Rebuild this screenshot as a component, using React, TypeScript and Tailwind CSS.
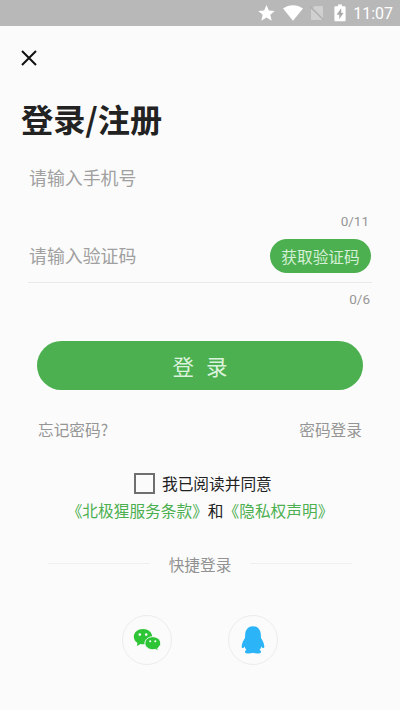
import { useState } from 'react';

const CODE_LENGTH = 6;
const PHONE_LENGTH = 11;

// ─── Icons ────────────────────────────────────────────────────────────────────

function StarIcon() {
  return (
    <svg width="17" height="16" viewBox="0 0 17 16" fill="#fff">
      <path d="M8.5 0l2.4 5.4 5.9.5-4.500 3.900 1.400 5.900-5.200-3.100-5.200 3.100 1.400-5.900L.2 5.900l5.900-.5z" />
    </svg>
  );
}

function WifiIcon() {
  return (
    <svg width="20" height="16" viewBox="0 0 20 16" fill="#fff">
      <path d="M0 3.6C5.8-.9 14.2-.9 20 3.6L10 15.8z" />
    </svg>
  );
}

function NoSimIcon() {
  return (
    <svg width="14" height="16" viewBox="0 0 14 16">
      <path d="M4.6 1H12a1 1 0 0 1 1 1v12a1 1 0 0 1-1 1H2a1 1 0 0 1-1-1V4.6z" fill="#d0d0d0" />
      <path d="M0 1.4l13.4 13.4" stroke="#b0b0b0" strokeWidth="1.6" />
    </svg>
  );
}

function BatteryIcon() {
  return (
    <svg width="12" height="18" viewBox="0 0 12 18">
      <path d="M4 0.5h4v1.8h2.6a1 1 0 0 1 1 1v13a1 1 0 0 1-1 1H1.4a1 1 0 0 1-1-1v-13a1 1 0 0 1 1-1H4z" fill="#fff" />
      <path d="M7 4.8L3 10.4h2.5v4.2L9.2 9H7z" fill="#a8a8a8" stroke="#a8a8a8" strokeWidth="0.4" />
    </svg>
  );
}

function WechatIcon() {
  return (
    <svg width="28" height="24" viewBox="0 0 28 24">
      <path d="M10 1C4.9 1 .8 4.400.8 8.700c0 2.500 1.400 4.700 3.600 6.100l-.4 3.200 3.500-2c.8.2 1.700.3 2.500.3 5.100 0 9.200-3.300 9.200-7.600S15.100 1 10 1z" fill="#2dc535" />
      <path
        d="M19.800 8.700c-4.400 0-7.900 2.900-7.900 6.500s3.500 6.500 7.900 6.500c.9 0 1.800-.1 2.600-.4l2.800 1.600-.4-2.900c1.800-1.200 2.900-2.900 2.900-4.800 0-3.600-3.500-6.500-7.900-6.500z"
        fill="#2dc535"
        stroke="#fbfbfb"
        strokeWidth="1"
      />
      <circle cx="6.800" cy="6.600" r="1.300" fill="#fbfbfb" />
      <circle cx="13.200" cy="6.600" r="1.300" fill="#fbfbfb" />
      <circle cx="17.200" cy="13.200" r="1.050" fill="#fbfbfb" />
      <circle cx="22.300" cy="13.200" r="1.050" fill="#fbfbfb" />
    </svg>
  );
}

function QqIcon() {
  return (
    <svg width="24" height="28" viewBox="0 0 24 28" fill="#2cb4f8">
      <path d="M12 .3C7.500.3 4.400 3.700 4.200 8.200L4 12C2.300 14.500.8 17.500.7 20.200c0 1.300.3 1.900.8 1.900.7 0 1.500-.8 2.100-1.700.4 1.500 1 2.800 1.900 3.700-.9.400-1.500 1-1.500 1.800 0 1.100 1.500 1.500 4 1.500 1.600 0 3.100-.2 4-.6.9.4 2.400.6 4 .6 2.500 0 4-.4 4-1.500 0-.8-.6-1.400-1.500-1.800.9-.9 1.500-2.200 1.900-3.700.6.900 1.400 1.700 2.100 1.700.5 0 .8-.6.8-1.900C23.200 17.500 21.700 14.500 20 12l-.2-3.800C19.600 3.700 16.500.3 12 .3z" />
    </svg>
  );
}

// ─── Sections ─────────────────────────────────────────────────────────────────

function StatusBar() {
  return (
    <header className="flex h-[26px] items-center justify-end bg-[#b8b8b8] pr-[7px]">
      <StarIcon />
      <span className="ml-[8px]"><WifiIcon /></span>
      <span className="ml-[7px]"><NoSimIcon /></span>
      <span className="ml-[10px]"><BatteryIcon /></span>
      <span className="ml-[7px] w-[40px] pt-[2px] text-right font-[Roboto] text-[16px] leading-[24px] text-white">11:07</span>
    </header>
  );
}

function Counter({ value, max }: { value: string; max: number }) {
  return (
    <div className="text-right font-[Roboto] text-[13.5px] leading-4 text-[#969696]">
      {value.length}/{max}
    </div>
  );
}

const INPUT_CLASS =
  'min-w-0 flex-1 bg-transparent text-[17.9px] leading-[26px] text-gray-800 outline-none placeholder:text-[#a0a0a0]';

// ─── Page ─────────────────────────────────────────────────────────────────────

export default function App() {
  const [phone, setPhone] = useState('');
  const [code, setCode] = useState('');
  const [agreed, setAgreed] = useState(false);

  return (
    <div className="flex h-[710px] w-[400px] flex-col overflow-hidden bg-[#fbfbfb] font-['Noto_Sans_CJK_SC',sans-serif]">
      <StatusBar />

      <button type="button" className="mt-[24px] ml-[21px] size-4">
        <svg width="16" height="16" viewBox="0 0 16 16" stroke="#111" strokeWidth="2">
          <path d="M1 1l14 14M15 1L1 15" />
        </svg>
      </button>

      <h1 className="mt-[31px] ml-[21px] h-[42px] text-[32.200px] leading-[42px] font-bold text-[#222]">登录/注册</h1>

      {/* Phone and code fields */}
      <div className="mt-[25px] flex h-[26px] pl-[29px]">
        <input
          className={INPUT_CLASS}
          placeholder="请输入手机号"
          maxLength={PHONE_LENGTH}
          value={phone}
          onChange={(e) => setPhone(e.target.value)}
        />
      </div>
      <div className="mt-[23px] pr-[31px]">
        <Counter value={phone} max={PHONE_LENGTH} />
      </div>

      <div className="mt-[10px] mr-[28px] ml-[28px] flex h-[44px] items-start border-b border-[#e9e9e9] pl-px">
        <input
          className={`${INPUT_CLASS} mt-[3px]`}
          placeholder="请输入验证码"
          maxLength={CODE_LENGTH}
          value={code}
          onChange={(e) => setCode(e.target.value)}
        />
        <button
          type="button"
          className="mr-px h-[34px] w-[101px] rounded-full bg-[#4caf50] pt-px text-[15.7px] leading-[33px] text-[#d5f0d6]"
        >
          获取验证码
        </button>
      </div>
      <div className="mt-[8px] pr-[30px]">
        <Counter value={code} max={CODE_LENGTH} />
      </div>

      <button
        type="button"
        className="mt-[34px] ml-[37px] flex h-[49px] w-[326px] items-center justify-center gap-[12px] rounded-full bg-[#4caf50] text-[21.500px] leading-[49px] text-[#dbf3dc]"
      >
        <span>登</span>
        <span>录</span>
      </button>

      <div className="mt-[29px] flex justify-between pr-[38px] pl-[38px] text-[15.700px] leading-[22px] text-[#959595]">
        <a>忘记密码?</a>
        <a>密码登录</a>
      </div>

      {/* Agreement */}
      <label className="mt-[31px] ml-[134px] flex h-[24px] items-center text-[15.700px] text-[#222]">
        <input
          type="checkbox"
          className="-mt-[2px] size-[21px] appearance-none border-2 border-[#6f6f6f] checked:bg-[#4caf50]"
          checked={agreed}
          onChange={(e) => setAgreed(e.target.checked)}
        />
        <span className="ml-[7px]">我已阅读并同意</span>
      </label>
      <p className="mt-[4px] text-center text-[15.700px] leading-[22px] whitespace-nowrap text-[#222]">
        <a className="text-[#4caf50]">《北极猩服务条款》</a>和<a className="text-[#4caf50]">《隐私权声明》</a>
      </p>

      {/* Third-party sign in */}
      <div className="mt-[32px] flex h-[22px] items-center justify-center gap-[19px] text-[15.700px] leading-[22px] text-[#929292]">
        <span className="-mt-[4px] h-px w-[102px] bg-[#efefef]" />
        <span>快捷登录</span>
        <span className="-mt-[4px] h-px w-[102px] bg-[#efefef]" />
      </div>
      <div className="mt-[39px] flex justify-center gap-[56px]">
        <button type="button" className="flex size-[50px] items-center justify-center rounded-full border border-[#ececec]">
          <WechatIcon />
        </button>
        <button type="button" className="flex size-[50px] items-center justify-center rounded-full border border-[#ececec]">
          <QqIcon />
        </button>
      </div>
    </div>
  );
}
